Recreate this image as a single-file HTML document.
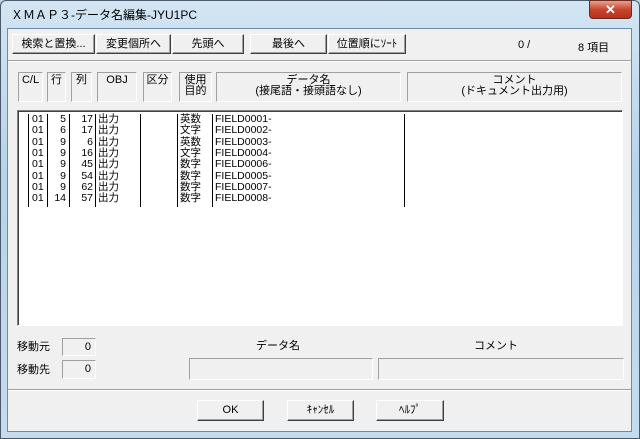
<!DOCTYPE html><html><head><meta charset="utf-8"><style>
*{box-sizing:border-box;margin:0;padding:0}
body{width:640px;height:439px;overflow:hidden;background:#bcd6ea;font-family:"Liberation Sans","Noto Sans CJK JP",sans-serif;font-size:11px;color:#000;position:relative}
.a{position:absolute;white-space:nowrap}
.frame{left:0;top:0;width:640px;height:439px;background:linear-gradient(#d3e5f3,#b7d2e9 40%,#c5dcee);border:1px solid #4a5a6a;border-radius:6px 6px 0 0}
.client{left:7px;top:28px;width:625px;height:404px;background:#f0f0f0;border:1px solid #6f8aa4}
.btn{position:absolute;background:#f0f0f0;border:1px solid;border-color:#fff #404040 #404040 #fff;box-shadow:inset -1px -1px #a0a0a0;text-align:center;line-height:18px;font-size:11px;white-space:nowrap}
.hd{position:absolute;border:1px solid;border-color:#a0a0a0 #fff #fff #a0a0a0;top:72px;height:30px;text-align:center;line-height:11px;font-size:11px;padding-top:2px;white-space:nowrap}
.sunk{position:absolute;border:1px solid;border-color:#a0a0a0 #fff #fff #a0a0a0}
.row{position:absolute;left:0;width:640px;height:11px;font-size:10.5px;line-height:11px;white-space:nowrap}
.row span{position:absolute;white-space:nowrap}
.vl{position:absolute;top:114px;height:93px;width:1px;background:#000}
</style></head><body>
<div class="a frame"></div>
<div class="a" style="left:11px;top:6px;font-size:12px;color:#000">ＸＭＡＰ３-データ名編集-JYU1PC</div>
<div class="a" style="left:589px;top:0;width:43px;height:19px;border-radius:0 0 4px 4px;background:linear-gradient(#e8a090,#c8452e 50%,#b83020);border:1px solid #6a2a20;color:#fff;text-align:center;font-weight:bold;font-size:13px;line-height:17px">✕</div>
<div class="a client"></div>
<div class="a" style="left:8px;top:60px;width:623px;height:2px;border-top:1px solid #a0a0a0;border-bottom:1px solid #fff"></div>
<div class="btn" style="left:12px;top:34px;width:83px;height:20px">検索と置換...</div>
<div class="btn" style="left:96px;top:34px;width:75px;height:20px">変更個所へ</div>
<div class="btn" style="left:172px;top:34px;width:72px;height:20px">先頭へ</div>
<div class="btn" style="left:250px;top:34px;width:77px;height:20px">最後へ</div>
<div class="btn" style="left:328px;top:34px;width:78px;height:20px">位置順にｿｰﾄ</div>
<div class="a" style="left:518px;top:39px">0 /</div>
<div class="a" style="left:578px;top:39px">8 項目</div>
<div class="hd" style="left:18px;width:25px">C/L</div>
<div class="hd" style="left:47px;width:19px">行</div>
<div class="hd" style="left:71px;width:21px">列</div>
<div class="hd" style="left:97px;width:40px">OBJ</div>
<div class="hd" style="left:143px;width:29px">区分</div>
<div class="hd" style="left:179px;width:33px">使用<br>目的</div>
<div class="hd" style="left:216px;width:185px">データ名<br>(接尾語・接頭語なし)</div>
<div class="hd" style="left:407px;width:215px">コメント<br>(ドキュメント出力用)</div>
<div class="a" style="left:17px;top:110px;width:606px;height:216px;background:#fff;border:1px solid;border-color:#808080 #fff #fff #808080;box-shadow:inset 1px 1px #404040"></div>
<div class="vl" style="left:28px"></div><div class="vl" style="left:47px"></div><div class="vl" style="left:69px"></div><div class="vl" style="left:95px"></div><div class="vl" style="left:140px"></div><div class="vl" style="left:177px"></div><div class="vl" style="left:212px"></div><div class="vl" style="left:404px"></div>
<div class="a" style="left:0;top:114px;width:640px;height:95px">
<div class="row" style="top:0"><span style="left:32px">01</span><span style="left:48px;width:18px;text-align:right">5</span><span style="left:70px;width:23px;text-align:right">17</span><span style="left:98px">出力</span><span style="left:180px">英数</span><span style="left:215px">FIELD0001-</span></div>
<div class="row" style="top:11.3px"><span style="left:32px">01</span><span style="left:48px;width:18px;text-align:right">6</span><span style="left:70px;width:23px;text-align:right">17</span><span style="left:98px">出力</span><span style="left:180px">文字</span><span style="left:215px">FIELD0002-</span></div>
<div class="row" style="top:22.6px"><span style="left:32px">01</span><span style="left:48px;width:18px;text-align:right">9</span><span style="left:70px;width:23px;text-align:right">6</span><span style="left:98px">出力</span><span style="left:180px">英数</span><span style="left:215px">FIELD0003-</span></div>
<div class="row" style="top:33.9px"><span style="left:32px">01</span><span style="left:48px;width:18px;text-align:right">9</span><span style="left:70px;width:23px;text-align:right">16</span><span style="left:98px">出力</span><span style="left:180px">文字</span><span style="left:215px">FIELD0004-</span></div>
<div class="row" style="top:45.2px"><span style="left:32px">01</span><span style="left:48px;width:18px;text-align:right">9</span><span style="left:70px;width:23px;text-align:right">45</span><span style="left:98px">出力</span><span style="left:180px">数字</span><span style="left:215px">FIELD0006-</span></div>
<div class="row" style="top:56.5px"><span style="left:32px">01</span><span style="left:48px;width:18px;text-align:right">9</span><span style="left:70px;width:23px;text-align:right">54</span><span style="left:98px">出力</span><span style="left:180px">数字</span><span style="left:215px">FIELD0005-</span></div>
<div class="row" style="top:67.8px"><span style="left:32px">01</span><span style="left:48px;width:18px;text-align:right">9</span><span style="left:70px;width:23px;text-align:right">62</span><span style="left:98px">出力</span><span style="left:180px">数字</span><span style="left:215px">FIELD0007-</span></div>
<div class="row" style="top:79.1px"><span style="left:32px">01</span><span style="left:48px;width:18px;text-align:right">14</span><span style="left:70px;width:23px;text-align:right">57</span><span style="left:98px">出力</span><span style="left:180px">数字</span><span style="left:215px">FIELD0008-</span></div>
</div>
<div class="a" style="left:17px;top:338px">移動元</div>
<div class="sunk" style="left:62px;top:338px;width:34px;height:18px;text-align:right;padding-right:4px;line-height:16px">0</div>
<div class="a" style="left:17px;top:361px">移動先</div>
<div class="sunk" style="left:62px;top:360px;width:34px;height:19px;text-align:right;padding-right:4px;line-height:17px">0</div>
<div class="a" style="left:256px;top:337px">データ名</div>
<div class="a" style="left:474px;top:337px">コメント</div>
<div class="sunk" style="left:189px;top:358px;width:184px;height:22px"></div>
<div class="sunk" style="left:378px;top:358px;width:246px;height:22px"></div>
<div class="a" style="left:8px;top:389px;width:623px;height:2px;border-top:1px solid #a0a0a0;border-bottom:1px solid #fff"></div>
<div class="btn" style="left:197px;top:400px;width:67px;height:21px">OK</div>
<div class="btn" style="left:287px;top:400px;width:67px;height:21px">ｷｬﾝｾﾙ</div>
<div class="btn" style="left:376px;top:400px;width:68px;height:21px">ﾍﾙﾌﾟ</div>
</body></html>
